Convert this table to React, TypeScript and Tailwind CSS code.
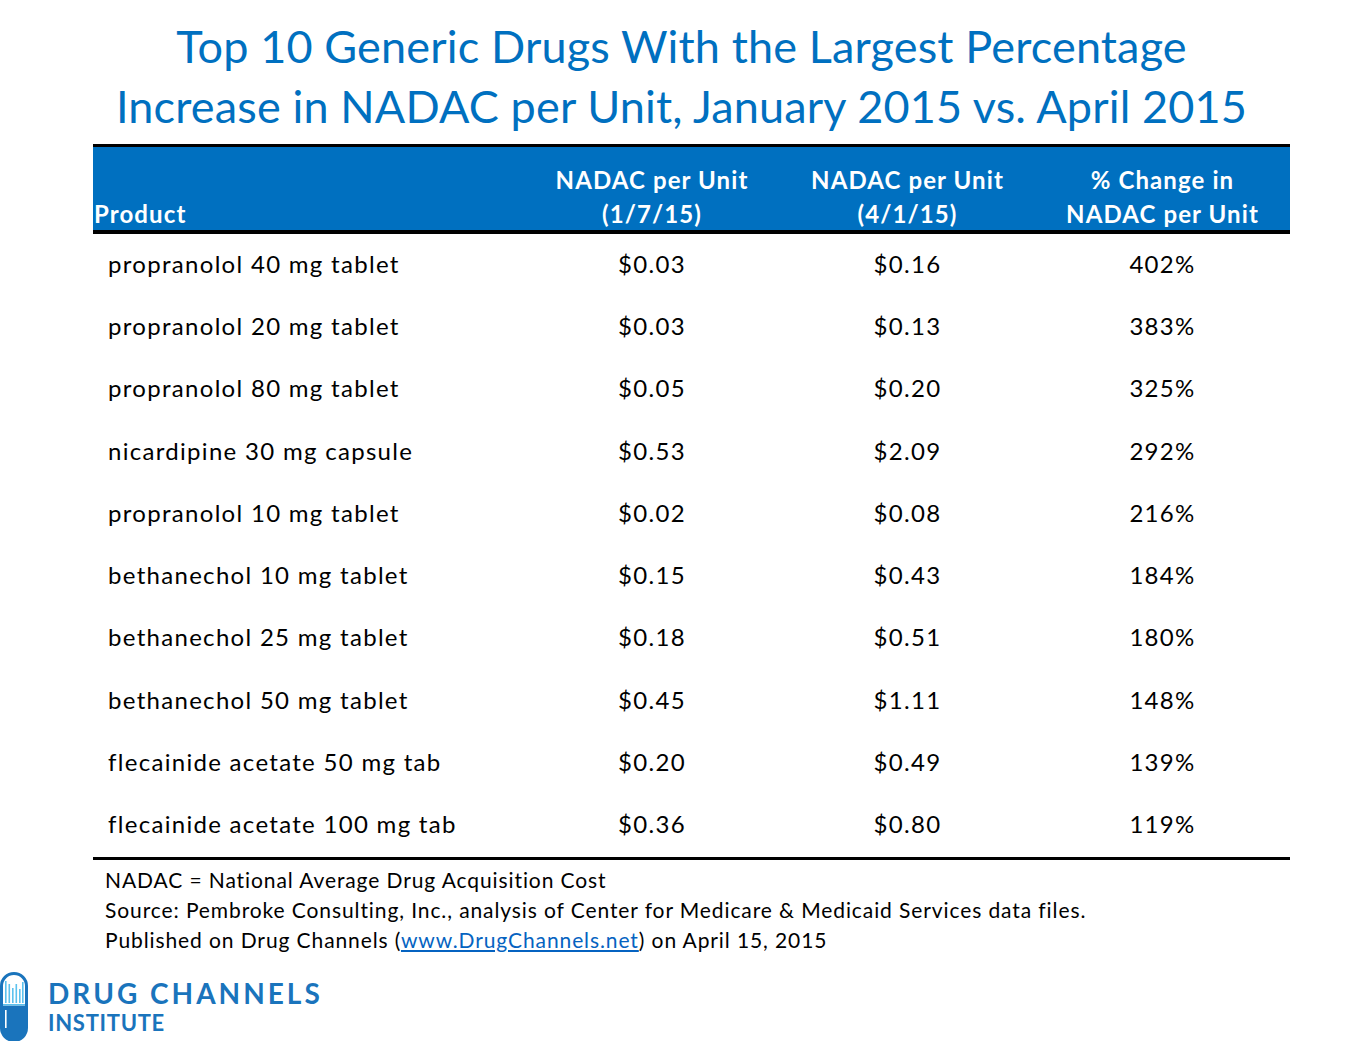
const ROWS = [
  ['propranolol 40 mg tablet', '$0.03', '$0.16', '402%'],
  ['propranolol 20 mg tablet', '$0.03', '$0.13', '383%'],
  ['propranolol 80 mg tablet', '$0.05', '$0.20', '325%'],
  ['nicardipine 30 mg capsule', '$0.53', '$2.09', '292%'],
  ['propranolol 10 mg tablet', '$0.02', '$0.08', '216%'],
  ['bethanechol 10 mg tablet', '$0.15', '$0.43', '184%'],
  ['bethanechol 25 mg tablet', '$0.18', '$0.51', '180%'],
  ['bethanechol 50 mg tablet', '$0.45', '$1.11', '148%'],
  ['flecainide acetate 50 mg tab', '$0.20', '$0.49', '139%'],
  ['flecainide acetate 100 mg tab', '$0.36', '$0.80', '119%'],
];

function Capsule() {
  return (
    <svg width="28" height="70" viewBox="0 0 28 70">
      <path d="M1.5 35 V14 A12.5 12.5 0 0 1 26.5 14 V35 Z" fill="#fff" stroke="#1a74bc" strokeWidth="3" />
      <path d="M0 35 H28 V56 A14 14 0 0 1 0 56 Z" fill="#1a74bc" />
      <rect x="5" y="38" width="1.6" height="18" fill="#fff" />
      <rect x="5" y="9" width="1.6" height="22" fill="#5cc2ee" />
      <rect x="8.5" y="12" width="1.6" height="19" fill="#5cc2ee" />
      <rect x="12" y="16" width="1.6" height="15" fill="#5cc2ee" />
      <rect x="15.5" y="12" width="1.6" height="19" fill="#5cc2ee" />
      <rect x="19" y="17" width="1.6" height="14" fill="#5cc2ee" />
      <rect x="22" y="10" width="1.6" height="21" fill="#5cc2ee" />
      <rect x="3" y="32" width="22" height="1.4" fill="#5cc2ee" />
    </svg>
  );
}

export default function App() {
  return (
    <div className="w-[1347px] h-[1041px] bg-white relative overflow-hidden" style={{ fontFamily: 'Lato, "Open Sans", sans-serif' }}>
      <h1 className="pt-[16px] pl-[16px] text-center text-[#0070c0] text-[45px] leading-[60px] tracking-[0.15px] font-normal">
        Top 10 Generic Drugs With the Largest Percentage
        <br />
        Increase in NADAC per Unit, January 2015 vs. April 2015
      </h1>

      <div className="ml-[93px] mt-[8px] w-[1197px]">
        <div className="border-t-[3px] border-b-[4px] border-black bg-[#0070c0] h-[90px] grid grid-cols-[431px_256px_255px_255px] items-end text-white font-bold text-[24px] leading-[34px] tracking-[1.1px]">
          <div className="pl-[1px] translate-y-[1px]">Product</div>
          <div className="text-center translate-y-[1px]">NADAC per Unit<br />(1/7/15)</div>
          <div className="text-center translate-y-[1px]">NADAC per Unit<br />(4/1/15)</div>
          <div className="text-center translate-y-[1px]">% Change in<br />NADAC per Unit</div>
        </div>
        <div className="border-b-[3px] border-black">
          {ROWS.map((r) => (
            <div key={r[0]} className="grid grid-cols-[431px_256px_255px_255px] h-[62.3px] items-center text-[24px] tracking-[1.3px] text-black">
              <div className="pl-[15px] pb-[3px]">{r[0]}</div>
              <div className="text-center pb-[3px]">{r[1]}</div>
              <div className="text-center pb-[3px]">{r[2]}</div>
              <div className="text-center pb-[3px]">{r[3]}</div>
            </div>
          ))}
        </div>
      </div>

      <div className="ml-[105px] mt-[5px] text-[21px] leading-[30px] tracking-[0.9px] text-black">
        <div>NADAC = National Average Drug Acquisition Cost</div>
        <div>Source: Pembroke Consulting, Inc., analysis of Center for Medicare &amp; Medicaid Services data files.</div>
        <div>
          Published on Drug Channels (<a className="text-[#0563c1] underline" href="#">www.DrugChannels.net</a>) on April 15, 2015
        </div>
      </div>

      <div className="absolute left-0 top-[972px] flex items-start gap-[20px]">
        <Capsule />
        <div className="pt-[6px] text-[#1a74bc] font-bold">
          <div className="text-[28px] leading-[30px] tracking-[3px]">DRUG CHANNELS</div>
          <div className="mt-[3px] text-[22px] leading-[24px] tracking-[0.7px]">INSTITUTE</div>
        </div>
      </div>
    </div>
  );
}
